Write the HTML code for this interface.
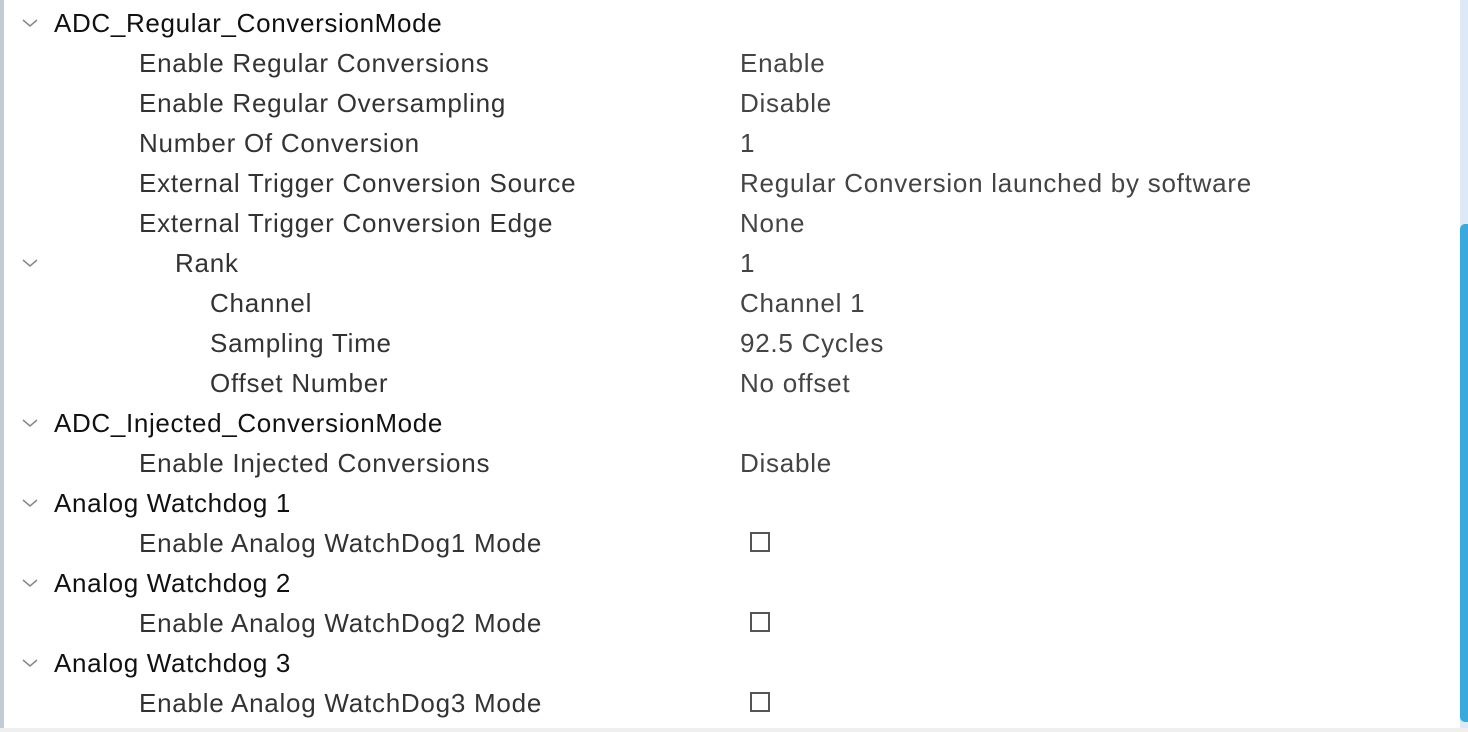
<!DOCTYPE html>
<html><head><style>
body{margin:0;width:1468px;height:732px;background:#fff;position:relative;overflow:hidden;font-family:"Liberation Sans",sans-serif;}
.lb{position:absolute;left:0;top:0;width:4px;height:732px;background:#c3ccd4}
.bt{position:absolute;left:0;top:728px;width:1468px;height:4px;background:#efefef}
.tr{position:absolute;left:1460px;top:0;width:8px;height:728px;background:#dde9f5}
.th{position:absolute;left:1460px;top:224px;width:8px;height:498px;background:#3aa9dd;border-radius:5px 0 0 5px}
.t{position:absolute;font-size:26px;letter-spacing:0.75px;line-height:40px;height:40px;white-space:nowrap;color:#333;margin-top:1px}
.h{color:#111;letter-spacing:0.65px}
.v{left:740px;color:#444}
.ch{position:absolute;left:22px;width:16px;height:10px}
.cb{position:absolute;left:750px;width:20px;height:20px;border:2px solid #555;box-sizing:border-box}
</style></head><body>
<div class="lb"></div><div class="bt"></div><div class="tr"></div><div class="th"></div>
<svg width="0" height="0" style="position:absolute"><defs><symbol id="c" viewBox="0 0 16 10"><path d="M1 2 L8 8 L15 2" fill="none" stroke="#888" stroke-width="1.5"/></symbol></defs></svg>
<svg class="ch" style="top:18px"><use href="#c"/></svg>
<div class="t h" style="left:54px;top:2px">ADC_Regular_ConversionMode</div>
<div class="t" style="left:139px;top:42px">Enable Regular Conversions</div><div class="t v" style="top:42px">Enable</div>
<div class="t" style="left:139px;top:82px">Enable Regular Oversampling</div><div class="t v" style="top:82px">Disable</div>
<div class="t" style="left:139px;top:122px">Number Of Conversion</div><div class="t v" style="top:122px">1</div>
<div class="t" style="left:139px;top:162px">External Trigger Conversion Source</div><div class="t v" style="top:162px">Regular Conversion launched by software</div>
<div class="t" style="left:139px;top:202px">External Trigger Conversion Edge</div><div class="t v" style="top:202px">None</div>
<svg class="ch" style="top:258px"><use href="#c"/></svg>
<div class="t" style="left:175px;top:242px">Rank</div><div class="t v" style="top:242px">1</div>
<div class="t" style="left:210px;top:282px">Channel</div><div class="t v" style="top:282px">Channel 1</div>
<div class="t" style="left:210px;top:322px">Sampling Time</div><div class="t v" style="top:322px">92.5 Cycles</div>
<div class="t" style="left:210px;top:362px">Offset Number</div><div class="t v" style="top:362px">No offset</div>
<svg class="ch" style="top:418px"><use href="#c"/></svg>
<div class="t h" style="left:54px;top:402px">ADC_Injected_ConversionMode</div>
<div class="t" style="left:139px;top:442px">Enable Injected Conversions</div><div class="t v" style="top:442px">Disable</div>
<svg class="ch" style="top:498px"><use href="#c"/></svg>
<div class="t h" style="left:54px;top:482px">Analog Watchdog 1</div>
<div class="t" style="left:139px;top:522px">Enable Analog WatchDog1 Mode</div><div class="cb" style="top:532px"></div>
<svg class="ch" style="top:578px"><use href="#c"/></svg>
<div class="t h" style="left:54px;top:562px">Analog Watchdog 2</div>
<div class="t" style="left:139px;top:602px">Enable Analog WatchDog2 Mode</div><div class="cb" style="top:612px"></div>
<svg class="ch" style="top:658px"><use href="#c"/></svg>
<div class="t h" style="left:54px;top:642px">Analog Watchdog 3</div>
<div class="t" style="left:139px;top:682px">Enable Analog WatchDog3 Mode</div><div class="cb" style="top:692px"></div>
</body></html>
